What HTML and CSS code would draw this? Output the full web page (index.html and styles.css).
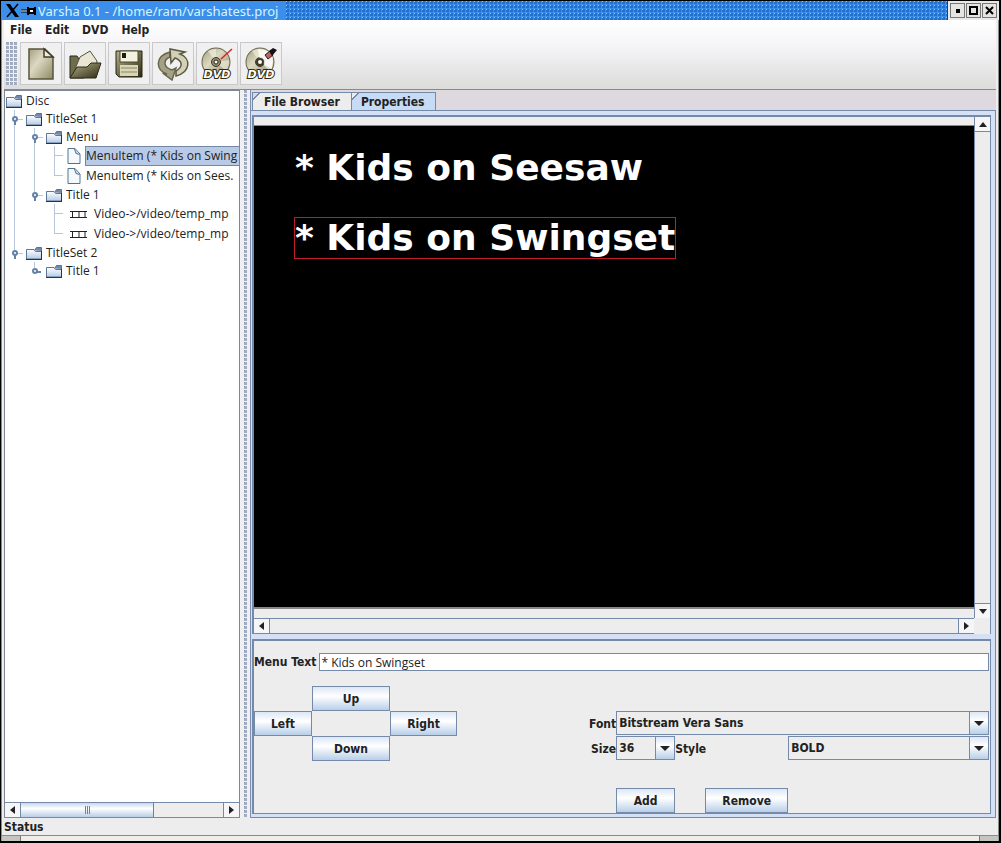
FILE: index.html
```
<!DOCTYPE html>
<html lang="en">

<head>
    <meta charset="UTF-8">
    <meta name="viewport" content="width=device-width, initial-scale=1.0">
    <title>Varsha 0.1</title>
    <link rel="stylesheet" href="styles.css">
</head>

<body>

    <!-- Shared icons -->
    <svg class="defs" width="0" height="0">
        <defs>
            <linearGradient id="folderFill" x1="0" y1="0" x2="0" y2="1">
                <stop offset="0" stop-color="#fff" />
                <stop offset="1" stop-color="#b4cbe6" />
            </linearGradient>
            <linearGradient id="olive" x1="0" y1="0" x2="1" y2="1">
                <stop offset="0" stop-color="#a39f80" />
                <stop offset="0.4" stop-color="#dcd9c2" />
                <stop offset="1" stop-color="#8d8965" />
            </linearGradient>
            <linearGradient id="oliveDark" x1="0" y1="0" x2="1" y2="1">
                <stop offset="0" stop-color="#b5b18c" />
                <stop offset="1" stop-color="#2d2a12" />
            </linearGradient>
            <symbol id="folder" viewBox="0 0 16 13">
                <path d="M8.5 3.5 L10.5 0.5 H15.5 V4" fill="#7189ab" stroke="#5a7294" />
                <path d="M0.5 2.5 H8 L9.5 4.5 H15.5 V12 H0.5 Z" fill="url(#folderFill)" stroke="#5f7694" />
                <path d="M0 12.5 H16 M15.5 4 V12" stroke="#2b3440" fill="none" />
            </symbol>
            <symbol id="file" viewBox="0 0 13 16">
                <path d="M0.5 0.5 H7.5 L12.5 6 V15.5 H0.5 Z" fill="#f5f9fd" stroke="#54728e" />
                <path d="M7 1 L8.5 5.5 L12 6.5" fill="#c5d8ec" stroke="#54728e" />
            </symbol>
            <symbol id="film" viewBox="0 0 17 9">
                <path d="M0 1.5 H17 M0 7.5 H17 M2.5 1 V8 M9 1 V8 M15 1 V8" fill="none" stroke="#222" />
            </symbol>
            <symbol id="disc" viewBox="0 0 32 32">
                <circle cx="16" cy="15" r="14.5" fill="#6b6850" />
                <circle cx="16" cy="15" r="13.5" fill="url(#olive)" />
                <path d="M16 15 L8 4 Q12 2 16 2 Z M16 15 L26 24 Q30 18 29 13 Z" fill="#f0eedd" opacity="0.7" />
                <circle cx="16" cy="15" r="4.5" fill="#908c70" stroke="#3b3825" />
                <circle cx="16" cy="15" r="2" fill="#fff" stroke="#2b2918" />
            </symbol>
        </defs>
    </svg>

    <header class="title-bar">
        <svg class="title-icon" width="32" height="16" viewBox="0 0 32 16">
            <path d="M1 1 H5 L14 14 H10 Z" fill="#000" />
            <path d="M13 1 L2 14" stroke="#000" stroke-width="1.5" />
            <path d="M16 8 H23" stroke="#000" stroke-width="3" />
            <path d="M16 8 H23" stroke="#fff" stroke-width="1" />
            <path d="M23 4 V12 M24 6 H29 V10 H24 Z M30 4 V12" fill="#fff" stroke="#000" stroke-width="2" />
        </svg>
        <span class="title-text">Varsha 0.1 - /home/ram/varshatest.proj</span>
        <span class="title-grip"></span>
        <span class="title-buttons">
            <button type="button" aria-label="Minimize"><svg width="11" height="11"><path d="M4 4 H8 V8 H4 Z" /></svg></button>
            <button type="button" aria-label="Maximize"><svg width="11" height="11"><path d="M2 2 H9 V9 H2 Z" fill="none" stroke="#000" stroke-width="2" /></svg></button>
            <button type="button" aria-label="Close"><svg width="11" height="11"><path d="M2 2 L9 9 M9 2 L2 9" stroke="#000" stroke-width="2" /></svg></button>
        </span>
    </header>

    <div class="client">
        <div class="top">
            <nav class="menu-bar">
                <button type="button">File</button>
                <button type="button">Edit</button>
                <button type="button">DVD</button>
                <button type="button">Help</button>
            </nav>
            <div class="toolbar">
                <span class="grip"></span>
                <button type="button" aria-label="New">
                    <svg width="32" height="34" viewBox="0 0 32 34">
                        <path d="M4 2 H20 L28 10 V32 H4 Z" fill="url(#olive)" stroke="#57543d" stroke-width="1.5" />
                        <path d="M19 2 V10 H28 Z" fill="#efedd8" stroke="#3f3c29" stroke-width="1.5" />
                    </svg>
                </button>
                <button type="button" aria-label="Open">
                    <svg width="34" height="34" viewBox="0 0 34 34">
                        <path d="M2 9 H9 L11 12 H16 V31 H2 Z" fill="#6f6c4c" stroke="#2b2918" />
                        <path d="M7 22 L12 10 L22 4 L29 14 L28 21 Z" fill="#e9e7d4" stroke="#55523a" />
                        <path d="M2 31 L9 20 H19 L23 16 H33 L28 31 Z" fill="url(#oliveDark)" stroke="#2b2918" />
                    </svg>
                </button>
                <button type="button" aria-label="Save">
                    <svg width="32" height="32" viewBox="0 0 32 32">
                        <path d="M3 3 H29 V29 H6 L3 26 Z" fill="url(#oliveDark)" stroke="#27240f" />
                        <path d="M7 3 H25 V14 H7 Z" fill="#f3f1df" stroke="#4a4730" />
                        <path d="M9 5 H13 V10 H9 Z" fill="#1d1b10" />
                        <path d="M7 17 H25 V28 H7 Z" fill="#d9d6b8" />
                        <path d="M8 20 H24 M8 24 H24" stroke="#8b8762" />
                    </svg>
                </button>
                <button type="button" aria-label="Refresh">
                    <svg width="34" height="34" viewBox="0 0 34 34">
                        <path d="M14 5 C-1 9 -1 23 11 27 H8 L16 33 L20 21 L16 23 C7 20 7 13 14 10 Z" fill="#a5a187" stroke="#69654b" stroke-width="1.5" />
                        <path d="M20 29 C35 25 35 11 24 7 L29 5 L14 2 L15 16 L19 11 C27 14 27 20 20 24 Z" fill="#d3d0b8" stroke="#5b583f" stroke-width="1.5" />
                    </svg>
                </button>
                <button type="button" aria-label="Author DVD">
                    <svg width="34" height="34" viewBox="0 0 34 34">
                        <use href="#disc" width="32" height="32" />
                        <text x="17" y="31" class="dvd-mark">DVD</text>
                        <path d="M21 12 L32 2" stroke="#e02020" stroke-width="1.5" />
                    </svg>
                </button>
                <button type="button" aria-label="Burn DVD">
                    <svg width="34" height="34" viewBox="0 0 34 34">
                        <use href="#disc" width="32" height="32" />
                        <path d="M16 15 L14 2 Q25 2 29 11 L28 22 Z" fill="#fff" opacity="0.8" />
                        <circle cx="16" cy="15" r="3" fill="#fff" stroke="#3b3825" stroke-width="2" />
                        <text x="17" y="31" class="dvd-mark">DVD</text>
                        <path d="M21 8 L26 4 L29 8 L24 12 Z" fill="#b86464" stroke="#3a1010" />
                        <path d="M25 4 L29 1 L33 3 L28 9 Z" fill="#161014" />
                    </svg>
                </button>
            </div>
        </div>

        <main class="split">
            <section class="tree-pane">
                <ul class="tree">
                    <li>
                        <div class="row"><svg width="16" height="13"><use href="#folder" /></svg><span>Disc</span></div>
                        <ul>
                            <li>
                                <div class="row open"><svg width="16" height="13"><use href="#folder" /></svg><span>TitleSet 1</span></div>
                                <ul>
                                    <li>
                                        <div class="row open"><svg width="16" height="13"><use href="#folder" /></svg><span>Menu</span></div>
                                        <ul>
                                            <li><div class="row leaf selected"><svg width="16" height="16"><use href="#file" /></svg><span>MenuItem (* Kids on Swing</span></div></li>
                                            <li><div class="row leaf"><svg width="16" height="16"><use href="#file" /></svg><span>MenuItem (* Kids on Sees.</span></div></li>
                                        </ul>
                                    </li>
                                    <li>
                                        <div class="row open"><svg width="16" height="13"><use href="#folder" /></svg><span>Title 1</span></div>
                                        <ul>
                                            <li><div class="row leaf video"><svg width="17" height="9"><use href="#film" /></svg><span>Video-&gt;/video/temp_mp</span></div></li>
                                            <li><div class="row leaf video"><svg width="17" height="9"><use href="#film" /></svg><span>Video-&gt;/video/temp_mp</span></div></li>
                                        </ul>
                                    </li>
                                </ul>
                            </li>
                            <li>
                                <div class="row open"><svg width="16" height="13"><use href="#folder" /></svg><span>TitleSet 2</span></div>
                                <ul>
                                    <li><div class="row closed"><svg width="16" height="13"><use href="#folder" /></svg><span>Title 1</span></div></li>
                                </ul>
                            </li>
                        </ul>
                    </li>
                </ul>
                <div class="scroll-h">
                    <button type="button" class="arrow left" aria-label="Scroll left"></button>
                    <span class="track"><span class="thumb"></span></span>
                    <button type="button" class="arrow right" aria-label="Scroll right"></button>
                </div>
            </section>

            <div class="divider"></div>

            <section class="tab-pane">
                <div class="tabs">
                    <button type="button" class="tab">File Browser</button>
                    <button type="button" class="tab active">Properties</button>
                </div>
                <div class="tab-body">
                    <div class="preview">
                        <div class="screen">
                            <div class="menu-label">* Kids on Seesaw</div>
                            <div class="menu-label chosen">* Kids on Swingset</div>
                        </div>
                        <div class="scroll-v">
                            <button type="button" class="arrow up" aria-label="Scroll up"></button>
                            <span class="track"></span>
                            <button type="button" class="arrow down" aria-label="Scroll down"></button>
                        </div>
                        <div class="scroll-h">
                            <button type="button" class="arrow left" aria-label="Scroll left"></button>
                            <span class="track"></span>
                            <button type="button" class="arrow right" aria-label="Scroll right"></button>
                        </div>
                    </div>

                    <form class="properties">
                        <div class="text-row">
                            <label for="menuText">Menu Text</label>
                            <input type="text" id="menuText" value="* Kids on Swingset">
                        </div>
                        <div class="controls">
                            <div class="pad">
                                <button type="button" class="btn pad-up">Up</button>
                                <button type="button" class="btn pad-left">Left</button>
                                <button type="button" class="btn pad-right">Right</button>
                                <button type="button" class="btn pad-down">Down</button>
                            </div>
                            <div class="font-grid">
                                <label for="font">Font</label>
                                <select id="font" class="font-select"><option>Bitstream Vera Sans</option></select>
                                <label for="size">Size</label>
                                <select id="size"><option>36</option></select>
                                <label for="style" class="style-label">Style</label>
                                <select id="style"><option>BOLD</option></select>
                                <button type="button" class="btn add">Add</button>
                                <button type="button" class="btn remove">Remove</button>
                            </div>
                        </div>
                    </form>
                </div>
            </section>
        </main>

        <footer class="status">Status</footer>
    </div>
    <div class="resize-bar"></div>

</body>

</html>
```
FILE: styles.css
```
/* Global Styles */
*,
*::before,
*::after {
    box-sizing: border-box;
}

body {
    margin: 0;
    padding: 1px 2px 2px 1px;
    min-height: 100vh;
    display: flex;
    flex-direction: column;
    background-color: #000;
    color: #222;
    font: bold 12px/16px "DejaVu Sans Condensed", "DejaVu Sans", sans-serif;
}

button,
input,
select {
    margin: 0;
    padding: 0;
    border: none;
    border-radius: 0;
    background: none;
    color: inherit;
    font: inherit;
}

svg {
    display: block;
    flex: none;
}

.defs {
    position: absolute;
}

/* Title Bar */
.title-bar {
    display: flex;
    align-items: center;
    height: 19px;
    background-color: #3b8fea;
    color: #d8f4ff;
    font: 13px/18px "Noto Sans", sans-serif;
}

.title-icon {
    margin: 0 1px 0 4px;
}

.title-text {
    margin-right: 8px;
    white-space: nowrap;
}

.title-grip {
    flex: 1;
    align-self: stretch;
    background-image: conic-gradient(at 1px 1px, transparent 75%, #8cc8ff 75%),
        conic-gradient(at 3px 3px, transparent 75%, #2470cc 75%);
    background-size: 4px 4px;
}

.title-buttons {
    display: flex;
    align-items: center;
    gap: 1px;
    align-self: stretch;
    padding: 0 2px;
    border-left: 1px solid #10408c;
    background-color: #e8e8e8;
}

.title-buttons button {
    padding: 1px;
    border: 1px solid #777;
    background-color: #e4e4e0;
}

/* Client area */
.client {
    flex: 1;
    display: flex;
    flex-direction: column;
    padding: 0 2px;
    border: 1px solid #8a8a8a;
    border-top: none;
    background-color: #ededed;
}

.top {
    border-bottom: 1px solid #83899a;
    background-image: linear-gradient(#fff, #f4f3f6 40%, #dcdcda);
}

.menu-bar {
    display: flex;
    gap: 13px;
    padding: 2px 6px 4px;
}

.toolbar {
    display: flex;
    gap: 2px;
    padding: 0 2px 4px;
}

.toolbar button {
    display: flex;
    align-items: center;
    justify-content: center;
    width: 42px;
    height: 43px;
    border: 1px solid #c9c9cc;
    background-color: #f0f0f0;
}

.grip,
.divider {
    background-color: #f0f0f2;
    background-image: conic-gradient(at 1px 1px, transparent 75%, #8f9bb5 75%),
        conic-gradient(at 3px 3px, transparent 75%, #a3adc0 75%);
    background-size: 4px 4px;
}

.grip {
    width: 12px;
}

.dvd-mark {
    font: italic bold 11px "DejaVu Sans", sans-serif;
    text-anchor: middle;
    fill: #fff;
    stroke: #2b2918;
    stroke-width: 2px;
    paint-order: stroke;
}

/* Split view */
.split {
    flex: 1;
    display: flex;
    min-height: 0;
}

.tree-pane {
    flex: none;
    width: 236px;
    display: flex;
    flex-direction: column;
    border: 1px solid #7f8796;
    border-bottom: none;
    background-color: #fff;
    overflow: hidden;
}

.divider {
    width: 10px;
    border: 1px solid #f0f0f2;
    border-width: 0 2px 0 4px;
}

/* Tree */
.tree {
    flex: 1;
    font: 12px/16px "Open Sans", sans-serif;
}

.tree,
.tree ul {
    margin: 0;
    padding: 0;
    list-style: none;
}

.tree {
    padding: 1px;
}

.tree ul {
    padding-left: 20px;
}

.tree ul li {
    position: relative;
}

/* Guide lines beside each branch */
.tree ul li::before {
    content: "";
    position: absolute;
    top: 0;
    bottom: 0;
    left: -12px;
    border-left: 1px solid #b8c6da;
}

.tree ul li:last-child::before {
    bottom: auto;
    height: 10px;
}

.tree ul .row::before {
    content: "";
    position: absolute;
    top: 9px;
    left: -12px;
    width: 9px;
    border-top: 1px solid #b8c6da;
}

.row {
    display: flex;
    align-items: center;
    gap: 4px;
    height: 18px;
    white-space: nowrap;
}

.row.leaf {
    height: 20px;
}

.row.video {
    gap: 7px;
    padding-left: 4px;
}

.row.selected span {
    flex: 1;
    margin: 0 -1px;
    border: 1px solid #7288a6;
    border-right: none;
    background-color: #b9cae6;
    line-height: 18px;
}

/* Expand handles */
.row.open::after,
.row.closed::after {
    content: "";
    position: absolute;
    top: 6px;
    left: -14px;
    width: 6px;
    height: 6px;
    border: 2px solid #6482a8;
    border-radius: 50%;
    background-color: #fff;
}

.tree ul .row.open::before {
    height: 6px;
    border-left: 2px solid #6482a8;
}

.tree ul .row.closed::before {
    width: 7px;
    border-top: 2px solid #6482a8;
}

/* Scroll bars */
.scroll-h {
    display: flex;
    height: 16px;
    border-top: 1px solid #7589a8;
    border-bottom: 1px solid #7589a8;
    background-color: #ededed;
}

.scroll-v {
    display: flex;
    flex-direction: column;
    width: 16px;
    border-left: 1px solid #7589a8;
    background-color: #ededed;
}

.track {
    flex: 1;
    display: flex;
    border: 1px solid #7589a8;
    border-width: 0 1px;
}

.scroll-v .track {
    border-width: 1px 0;
}

.thumb {
    width: 66%;
    border-right: 1px solid #6482b4;
    background: repeating-linear-gradient(90deg, #6482b4 0 1px, transparent 1px 2px) center / 5px 8px no-repeat,
        linear-gradient(#c5d8f0, #fff 40%, #b8cde8);
}

.arrow {
    display: flex;
    align-items: center;
    justify-content: center;
    width: 15px;
    height: 14px;
    background-color: #f6f6f8;
}

.arrow::before {
    content: "";
    border: 4px solid transparent;
}

.arrow.left::before {
    border-left: none;
    border-right: 5px solid #222;
}

.arrow.right::before {
    border-right: none;
    border-left: 5px solid #222;
}

.arrow.up::before {
    border-top: none;
    border-bottom: 5px solid #222;
}

.arrow.down::before {
    border-bottom: none;
    border-top: 5px solid #222;
}

/* Tabs */
.tab-pane {
    flex: 1;
    min-width: 0;
    display: flex;
    flex-direction: column;
    border-left: 1px solid #7f8fb4;
    background-color: #ddd9de;
}

.tabs {
    display: flex;
    padding: 2px 1px 0;
}

.tab {
    height: 18px;
    padding: 0 11px;
    border: 1px solid #7589a8;
    border-bottom: none;
    background: linear-gradient(135deg, #ddd9de 4px, #7589a8 4px 5px, #ededed 5px);
}

.tab.active {
    padding: 0 10px 0 9px;
    border-left: none;
    background: linear-gradient(135deg, #ededed 4px, #7589a8 4px 5px, #c8dbf5 5px);
}

.tab-body {
    flex: 1;
    display: flex;
    flex-direction: column;
    padding: 4px 4px 3px 1px;
    border: 1px solid #7589a8;
    border-left: none;
    background-color: #d3e0f5;
}

/* Preview */
.preview {
    flex: 1;
    display: grid;
    grid-template-columns: 1fr 16px;
    grid-template-rows: 1fr 16px;
    border: 2px solid #7589a8;
    border-right-width: 1px;
    border-bottom-width: 0;
    background-color: #ededed;
}

.screen {
    margin: 8px 0 9px;
    padding: 21px 40px;
    border: 1px solid #888;
    border-width: 1px 0 2px;
    background-color: #000;
    color: #fff;
    font: bold 36px/40px "DejaVu Sans", sans-serif;
}

.menu-label {
    width: fit-content;
    margin-bottom: 28px;
    border: 1px solid transparent;
    white-space: nowrap;
}

.menu-label.chosen {
    border-color: #c01c28;
}

/* Properties form */
.properties {
    margin-top: 5px;
    padding: 12px 1px 0 0;
    border: 2px solid #7589a8;
    border-width: 2px 1px 1px 2px;
    background-color: #ededed;
}

.text-row {
    display: flex;
    align-items: center;
    gap: 3px;
}

.text-row input {
    flex: 1;
    height: 18px;
    padding: 0 1px;
    border: 1px solid #7589a8;
    background-color: #fff;
    font: 12px/16px "Open Sans", sans-serif;
}

.controls {
    display: grid;
    grid-template-columns: auto minmax(400px, 54%);
    justify-content: space-between;
    padding-top: 15px;
}

.pad {
    display: grid;
    grid-template-columns: 58px 78px 67px;
    grid-template-rows: 25px 25px 25px;
    grid-template-areas: ". up ." "left . right" ". down .";
}

.pad-up {
    grid-area: up;
}

.pad-left {
    grid-area: left;
}

.pad-right {
    grid-area: right;
}

.pad-down {
    grid-area: down;
}

.btn {
    border: 1px solid #7589a8;
    background-image: linear-gradient(#dce7f5, #fff 40%, #b8cfe8);
}

.font-grid {
    display: grid;
    grid-template-columns: auto 59px 30px 83px 1fr;
    grid-template-rows: 25px 25px 27px 25px;
    padding-top: 25px;
}

.font-grid label {
    justify-self: end;
    align-self: center;
}

.font-grid .style-label {
    grid-column: 3 / 5;
    justify-self: start;
}

.font-select {
    grid-column: 2 / -1;
}

.font-grid select {
    appearance: none;
    height: 24px;
    padding: 0 20px 0 2px;
    border: 1px solid #7589a8;
    background: url("data:image/svg+xml,%3Csvg xmlns='http://www.w3.org/2000/svg' width='10' height='5'%3E%3Cpath d='M0 0H10L5 5Z' fill='%23222'/%3E%3C/svg%3E") right 4px center no-repeat,
        linear-gradient(#dce7f5, #fff 40%, #b8cfe8) right / 18px 100% no-repeat,
        linear-gradient(#7589a8, #7589a8) right / 19px 100% no-repeat,
        #ededed;
}

.add {
    grid-area: 4 / 2;
}

.remove {
    grid-area: 4 / 4;
}

/* Status bar */
.status {
    padding: 1px 0 0;
}

.resize-bar {
    height: 5px;
    border: 1px solid #9a9a9a;
    border-width: 0 1px;
    background: linear-gradient(90deg, #c4c4c0 18px, #777 18px 19px, #eeeee8 19px calc(100% - 19px), #777 calc(100% - 19px) calc(100% - 18px), #c4c4c0 calc(100% - 18px));
}
```
